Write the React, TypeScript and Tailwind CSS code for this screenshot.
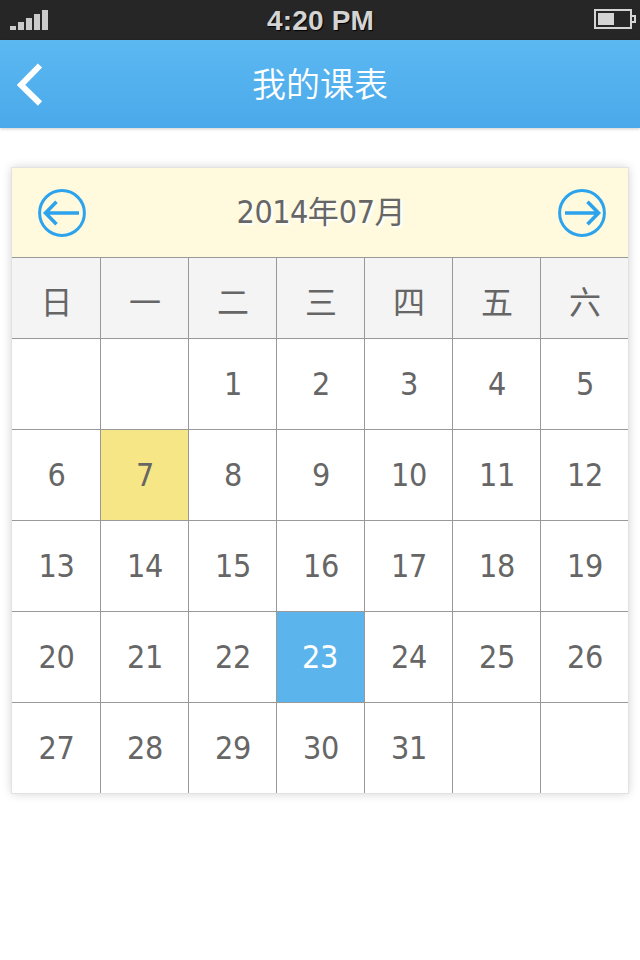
const WEEKDAYS = ["日", "一", "二", "三", "四", "五", "六"];
const LEADING_BLANKS = 2;
const DAYS_IN_MONTH = 31;
const MARKED_DAY = 7;
const SELECTED_DAY = 23;

const CELLS = Array.from({ length: 35 }, (_, i) => {
  const day = i - LEADING_BLANKS + 1;
  return day >= 1 && day <= DAYS_IN_MONTH ? day : null;
});

function StatusBar() {
  return (
    <div className="flex h-10 items-start justify-between bg-[#262626] text-[#d4d4d4]">
      <div className="flex h-[30px] w-[120px] items-end gap-0.5 pl-2.5">
        <span className="h-1 w-1.5 bg-[#cacaca]" />
        <span className="h-2 w-1.5 bg-[#cacaca]" />
        <span className="h-3 w-1.5 bg-[#cacaca]" />
        <span className="h-4 w-1.5 bg-[#cacaca]" />
        <span className="h-5 w-1.5 bg-[#cacaca]" />
      </div>
      <div className="pt-px pl-px text-[28px] leading-10 font-bold tracking-[0.2px] whitespace-nowrap [text-shadow:1px_1px_1px_#000] font-['Liberation_Sans',sans-serif]">
        4:20 PM
      </div>
      <div className="flex w-[120px] justify-end pt-[9px] pr-1">
        <svg width="42" height="20" viewBox="0 0 42 20" fill="none">
          <rect x="1" y="1" width="36" height="18" stroke="#d4d4d4" strokeWidth="2" />
          <rect x="4" y="4" width="16" height="12" fill="#d4d4d4" />
          <path d="M38 7h3v6h-3" stroke="#d4d4d4" strokeWidth="2" />
        </svg>
      </div>
    </div>
  );
}

function NavBar() {
  return (
    <div className="flex h-[88px] items-center bg-linear-to-b from-[#5bb8f1] to-[#4aa9ea] shadow-[0_1px_3px_rgba(0,0,0,0.2)]">
      <button className="w-[100px] pt-0.5 pl-4">
        <svg width="28" height="44" viewBox="0 0 28 44" fill="none">
          <path d="M24 2.5L5 22L24 40.5" stroke="#fff" strokeWidth="6" />
        </svg>
      </button>
      <h1 className="flex-1 pb-0.5 text-center text-[34px] leading-[86px] font-normal text-white font-['Noto_Sans_CJK_SC_DemiLight','Noto_Sans_CJK_SC',sans-serif]">
        我的课表
      </h1>
      <div className="w-[100px]" />
    </div>
  );
}

function CircleArrow({ flipped }: { flipped?: boolean }) {
  return (
    <svg
      width="48"
      height="48"
      viewBox="0 0 48 48"
      fill="none"
      stroke="#2ca3ec"
      className={flipped ? "-scale-x-100" : ""}
    >
      <circle cx="24" cy="24" r="22.4" strokeWidth="3" />
      <path d="M41 24H9M18.5 12.8L7.5 24L18.5 35.2" strokeWidth="3.6" />
    </svg>
  );
}

function Calendar() {
  return (
    <div className="mx-3 mt-10 bg-white text-[#666] shadow-[0_0_0_1px_#e2e2e2,0_0_10px_rgba(0,0,0,0.2)]">
      <div className="flex h-[90px] items-center justify-between border-b border-[#999] bg-[#fffadd] px-[22px] pl-[26px]">
        <CircleArrow />
        <div className="pr-0.5 pb-[3px] text-[32px] leading-[86px] tracking-[-0.5px] [text-shadow:2px_2px_2px_#fff] font-['DejaVu_Sans_Condensed','Noto_Sans_CJK_SC',sans-serif]">
          2014<span className="text-[31px] tracking-normal font-['Noto_Sans_CJK_SC']">年</span>07
          <span className="text-[31px] tracking-normal font-['Noto_Sans_CJK_SC']">月</span>
        </div>
        <CircleArrow flipped />
      </div>
      <div className="grid grid-cols-[89px_repeat(5,88px)_87px]">
        {WEEKDAYS.map((name, i) => (
          <div
            key={name}
            className={`h-20 bg-[#f4f4f4] pt-0.5 pl-px text-center text-[32px] leading-20 font-['Noto_Sans_CJK_SC',sans-serif] ${
              i < 6 ? "border-r border-[#999]" : ""
            }`}
          >
            {name}
          </div>
        ))}
        {CELLS.map((day, i) => (
          <div
            key={i}
            className={`h-[91px] border-t border-[#999] text-center text-[32px] leading-[91px] tracking-[-0.4px] font-['DejaVu_Sans_Condensed','DejaVu_Sans',sans-serif] ${
              i % 7 < 6 ? "border-r" : ""
            } ${day === MARKED_DAY ? "bg-[#f6e685]" : ""} ${
              day === SELECTED_DAY ? "bg-[#5cb4ec] pr-px text-white" : "pl-px"
            }`}
          >
            {day}
          </div>
        ))}
      </div>
    </div>
  );
}

export default function App() {
  return (
    <div className="h-[960px] w-[640px] overflow-hidden bg-white">
      <StatusBar />
      <NavBar />
      <Calendar />
    </div>
  );
}
